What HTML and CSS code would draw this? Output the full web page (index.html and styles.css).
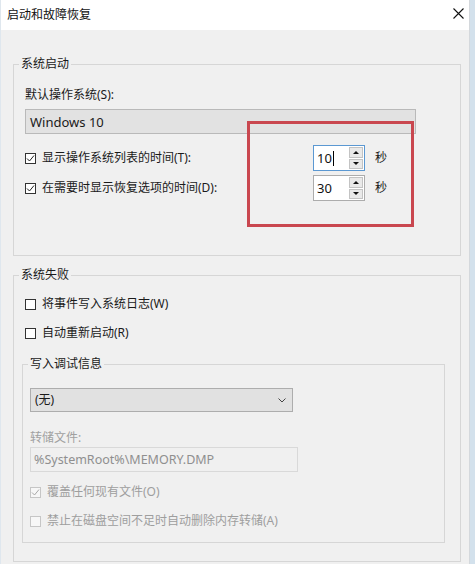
FILE: index.html
```html
<!DOCTYPE html>
<html lang="zh-CN">
<head>
<meta charset="utf-8">
<title>启动和故障恢复</title>
<link rel="stylesheet" href="styles.css">
</head>
<body>
<div class="window">
  <div class="titlebar">
    <span class="title">启动和故障恢复</span>
    <svg class="close" width="11" height="11" viewBox="0 0 11 11"><path d="M0.5 0.5 L10.5 10.5 M10.5 0.5 L0.5 10.5" stroke="#111" stroke-width="1.1" fill="none"/></svg>
  </div>
  <div class="content">
    <fieldset class="group g1">
      <legend>系统启动</legend>
      <div class="gbody g1body">
        <div class="label">默认操作系统(S):</div>
        <div class="combo os"><span>Windows 10</span></div>
        <div class="srow first">
          <div class="chk wide"><span class="cb"><svg width="9" height="9" viewBox="0 0 9 9"><path d="M1 4.5 L3.5 7 L8 1.5" stroke="#222" stroke-width="1" fill="none"/></svg></span><span>显示操作系统列表的时间(T):</span></div>
          <div class="spin focus"><div class="spin-val">10<span class="caret"></span></div><div class="spin-btns"><div class="spin-btn"><i class="up"></i></div><div class="spin-btn"><i class="down"></i></div></div></div>
          <span class="unit">秒</span>
        </div>
        <div class="srow">
          <div class="chk wide"><span class="cb"><svg width="9" height="9" viewBox="0 0 9 9"><path d="M1 4.5 L3.5 7 L8 1.5" stroke="#222" stroke-width="1" fill="none"/></svg></span><span>在需要时显示恢复选项的时间(D):</span></div>
          <div class="spin"><div class="spin-val">30</div><div class="spin-btns"><div class="spin-btn"><i class="up"></i></div><div class="spin-btn"><i class="down"></i></div></div></div>
          <span class="unit">秒</span>
        </div>
      </div>
    </fieldset>

    <fieldset class="group g2">
      <legend>系统失败</legend>
      <div class="gbody g2body">
        <div class="chk row-a"><span class="cb"></span><span>将事件写入系统日志(W)</span></div>
        <div class="chk row-b"><span class="cb"></span><span>自动重新启动(R)</span></div>
        <fieldset class="group inner">
          <legend>写入调试信息</legend>
          <div class="gbody innerbody">
            <div class="combo dbg"><span>(无)</span><svg class="chev" width="8" height="5" viewBox="0 0 8 5"><path d="M0.5 0.5 L4 4 L7.5 0.5" stroke="#444" stroke-width="1" fill="none"/></svg></div>
            <div class="label disabled dumplabel">转储文件:</div>
            <div class="textbox">%SystemRoot%\MEMORY.DMP</div>
            <div class="chk dis row-o"><span class="cb"><svg width="9" height="9" viewBox="0 0 9 9"><path d="M1 4.5 L3.5 7 L8 1.5" stroke="#a8a8a8" stroke-width="1" fill="none"/></svg></span><span>覆盖任何现有文件(O)</span></div>
            <div class="chk dis row-d"><span class="cb"></span><span>禁止在磁盘空间不足时自动删除内存转储(A)</span></div>
          </div>
        </fieldset>
      </div>
    </fieldset>
  </div>
  <div class="highlight"></div>
</div>
</body>
</html>
```

FILE: styles.css
```css
html, body {
  margin: 0;
  padding: 0;
}
html {
  background: #d3e1ec;
}
body {
  width: 475px;
  height: 564px;
  overflow: hidden;
  font-family: "Noto Sans", "Noto Sans CJK SC", sans-serif;
  font-size: 12px;
  line-height: 16px;
  color: #1a1a1a;
}
.window {
  position: relative;
  width: 470px;
  height: 564px;
  box-sizing: border-box;
  background: #f0f0f0;
  border-right: 1px solid #d4d8dc;
  border-left: 1px solid #dfe7ee;
}
.titlebar {
  height: 30px;
  background: #ffffff;
  display: flex;
  align-items: center;
  justify-content: space-between;
  padding: 0 5px 1px 6px;
  box-sizing: border-box;
}
.title {
  font-size: 12px;
  color: #111;
}
.close {
  margin-top: -2px;
}
.content {
  padding-left: 12px;
}
.group {
  margin: 0;
  padding: 0;
  border: 1px solid #d6d6d6;
  min-width: 0;
}
.group > legend {
  padding: 0 2px;
  margin-left: 5px;
  line-height: 16px;
  color: #1a1a1a;
}
.g1 {
  width: 448px;
  box-sizing: border-box;
  margin-top: 26px;
}
.g1body {
  padding: 0 12px 54px 11px;
}
.label {
  line-height: 16px;
}
.g1body .label {
  margin-top: 15px;
}
.combo {
  display: flex;
  align-items: center;
  justify-content: space-between;
  box-sizing: border-box;
  background: #e2e2e2;
  border: 1px solid #b9b9b9;
  padding: 0 6px 0 4px;
  font-size: 13px;
}
.combo.os {
  margin-top: 6px;
  width: 391px;
  height: 25px;
}
.srow {
  display: flex;
  align-items: center;
  height: 26px;
  margin-top: 4px;
}
.srow.first {
  margin-top: 11px;
}
.chk {
  display: flex;
  align-items: center;
  gap: 6px;
  line-height: 16px;
}
.chk.wide {
  width: 288px;
}
.cb {
  width: 11px;
  height: 11px;
  box-sizing: border-box;
  border: 1px solid #333;
  background: #fff;
  display: flex;
  align-items: center;
  justify-content: center;
  flex: none;
}
.chk.dis {
  color: #9e9e9e;
}
.chk.dis .cb {
  border-color: #c6c6c6;
  background: #f7f7f7;
}
.spin {
  display: flex;
  width: 52px;
  height: 26px;
  box-sizing: border-box;
  border: 1px solid #acacac;
  background: #fff;
}
.spin.focus {
  border-color: #5b98d2;
}
.spin-val {
  flex: 1;
  display: flex;
  align-items: center;
  padding-left: 3px;
  font-size: 13px;
  color: #111;
}
.caret {
  display: inline-block;
  width: 1px;
  height: 15px;
  background: #000;
  margin-left: 1px;
}
.spin-btns {
  width: 16px;
  display: flex;
  flex-direction: column;
  gap: 1px;
  padding: 1px;
  box-sizing: border-box;
}
.spin-btn {
  flex: 1;
  border: 1px solid #c3c3c3;
  background: #e9e9e9;
  display: flex;
  align-items: center;
  justify-content: center;
}
.spin-btn i {
  width: 0;
  height: 0;
  border-left: 3px solid transparent;
  border-right: 3px solid transparent;
}
.spin-btn i.up {
  border-bottom: 3px solid #111;
}
.spin-btn i.down {
  border-top: 3px solid #111;
}
.unit {
  margin-left: 10px;
}
.g2 {
  width: 448px;
  box-sizing: border-box;
  margin-top: 11px;
}
.g2body {
  padding: 0 8px 18px 8px;
}
.row-a {
  margin-top: 13px;
  padding-left: 3px;
}
.row-b {
  margin-top: 13px;
  padding-left: 3px;
}
.inner {
  margin-top: 15px;
  width: 423px;
  box-sizing: border-box;
}
.innerbody {
  padding: 0 7px 13px 7px;
}
.combo.dbg {
  margin-top: 16px;
  width: 263px;
  height: 24px;
  background: #e1e1e1;
  border-color: #adadad;
  font-size: 12px;
}
.chev {
  margin-right: 0;
}
.label.disabled {
  color: #a0a0a0;
}
.dumplabel {
  margin-top: 18px;
}
.textbox {
  margin-top: 1px;
  width: 268px;
  height: 25px;
  box-sizing: border-box;
  border: 1px solid #d9d9d9;
  background: #f0f0f0;
  color: #8f8f8f;
  font-size: 12.5px;
  display: flex;
  align-items: center;
  padding-left: 3px;
}
.row-o {
  margin-top: 12px;
}
.row-d {
  margin-top: 13px;
}
.highlight {
  position: absolute;
  left: 246px;
  top: 121px;
  width: 167px;
  height: 106px;
  box-sizing: border-box;
  border: 3px solid #c9474f;
}
```
